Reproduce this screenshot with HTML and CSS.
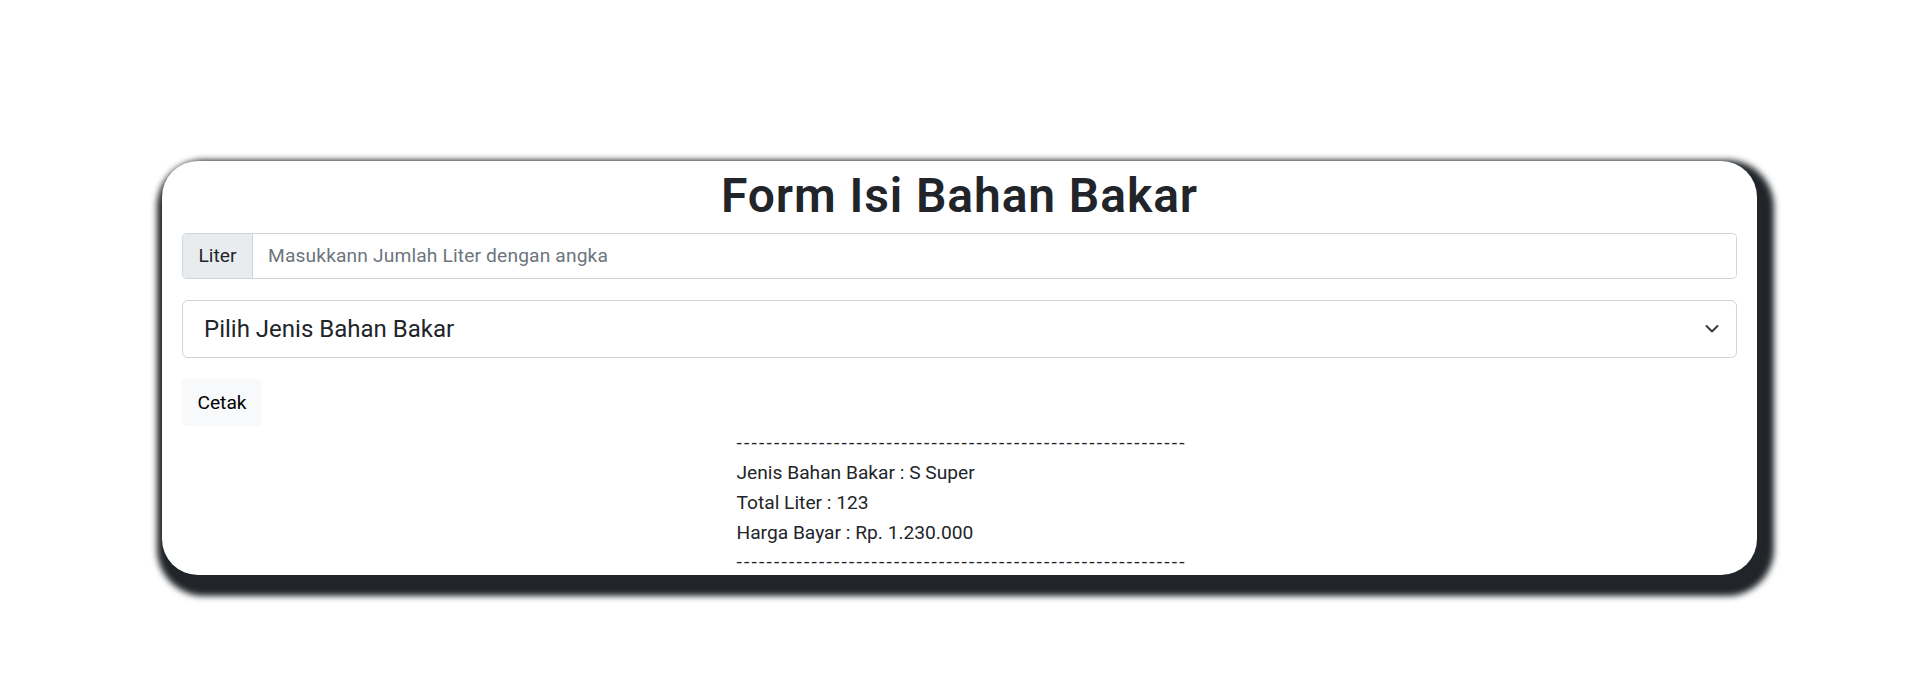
FILE: index.html
```html
<!DOCTYPE html>
<html lang="id">
<head>
<meta charset="utf-8">
<title>Form Isi Bahan Bakar</title>
<link rel="stylesheet" href="styles.css">
</head>
<body>
<div class="card">
  <h1 class="title">Form Isi Bahan Bakar</h1>
  <div class="input-group">
    <span class="addon">Liter</span>
    <input class="field" type="text" placeholder="Masukkann Jumlah Liter dengan angka">
  </div>
  <div class="select-wrap">
    <select class="select">
      <option>Pilih Jenis Bahan Bakar</option>
      <option>S Super</option>
      <option>S V-Power</option>
      <option>S V-Power Diesel</option>
      <option>S V-Power Nitro</option>
    </select>
    <svg class="chevron" width="16" height="10" viewBox="0 0 16 10" aria-hidden="true"><path d="M2.5 2 L8 7.5 L13.5 2" fill="none" stroke="#343a40" stroke-width="2" stroke-linecap="round" stroke-linejoin="round"/></svg>
  </div>
  <button class="btn" type="button">Cetak</button>
  <div class="receipt">
    <div class="line dash">------------------------------------------------------------</div>
    <div class="line">Jenis Bahan Bakar : S Super</div>
    <div class="line">Total Liter : 123</div>
    <div class="line">Harga Bayar : Rp. 1.230.000</div>
    <div class="line dash dash-end">------------------------------------------------------------</div>
  </div>
</div>
</body>
</html>
```
FILE: styles.css
```css
html, body {
  margin: 0;
  padding: 0;
  background: #fff;
}
body {
  font-family: Roboto, "Open Sans", sans-serif;
  color: #212529;
  font-size: 19.2px;
  padding-bottom: 122px;
}
.card {
  margin: 161px 161px 0 162px;
  padding: 6px 20px 0 20px;
  background: #fff;
  border-radius: 36px;
  box-shadow: 6px 10px 6px 11px #212529;
}
.title {
  margin: 0 0 8px 0;
  font-size: 48px;
  line-height: 57.6px;
  font-weight: 600;
  letter-spacing: 0.9px;
  text-align: center;
  color: #212529;
}
.input-group {
  display: flex;
  height: 46px;
  border: 1px solid #ced4da;
  border-radius: 4.5px;
  overflow: hidden;
  margin-bottom: 21px;
  box-sizing: border-box;
}
.addon {
  display: flex;
  align-items: center;
  justify-content: center;
  width: 69px;
  background: #e9ecef;
  border-right: 1px solid #ced4da;
  font-size: 19.2px;
  color: #212529;
}
.field {
  flex: 1;
  border: 0;
  outline: none;
  padding: 0 15px;
  font-family: inherit;
  font-size: 19.2px;
  letter-spacing: 0.15px;
  color: #212529;
  background: #fff;
}
.field::placeholder {
  color: #6c757d;
  opacity: 1;
}
.select-wrap {
  position: relative;
  margin-bottom: 21px;
}
.select {
  display: block;
  width: 100%;
  height: 58px;
  box-sizing: border-box;
  border: 1px solid #ced4da;
  border-radius: 6px;
  padding: 0 48px 0 21px;
  font-family: inherit;
  font-size: 24px;
  color: #212529;
  background: #fff;
  appearance: none;
  -webkit-appearance: none;
  outline: none;
}
.chevron {
  position: absolute;
  right: 17px;
  top: 50%;
  transform: translateY(-50%);
  pointer-events: none;
}
.btn {
  display: block;
  width: 80px;
  height: 47px;
  border: 0;
  border-radius: 5px;
  background: #f8f9fa;
  color: #000;
  font-family: inherit;
  font-size: 19.2px;
  padding: 0;
}
.receipt {
  width: 446px;
  margin: 0 auto;
  padding-top: 2px;
  box-sizing: border-box;
}
.line {
  height: 30px;
  line-height: 30px;
  white-space: nowrap;
  font-size: 19.2px;
}
.dash {
  letter-spacing: 2.2px;
}
.dash-end {
  height: 27.5px;
  line-height: 26px;
  padding-top: 1.5px;
  box-sizing: border-box;
}
```
